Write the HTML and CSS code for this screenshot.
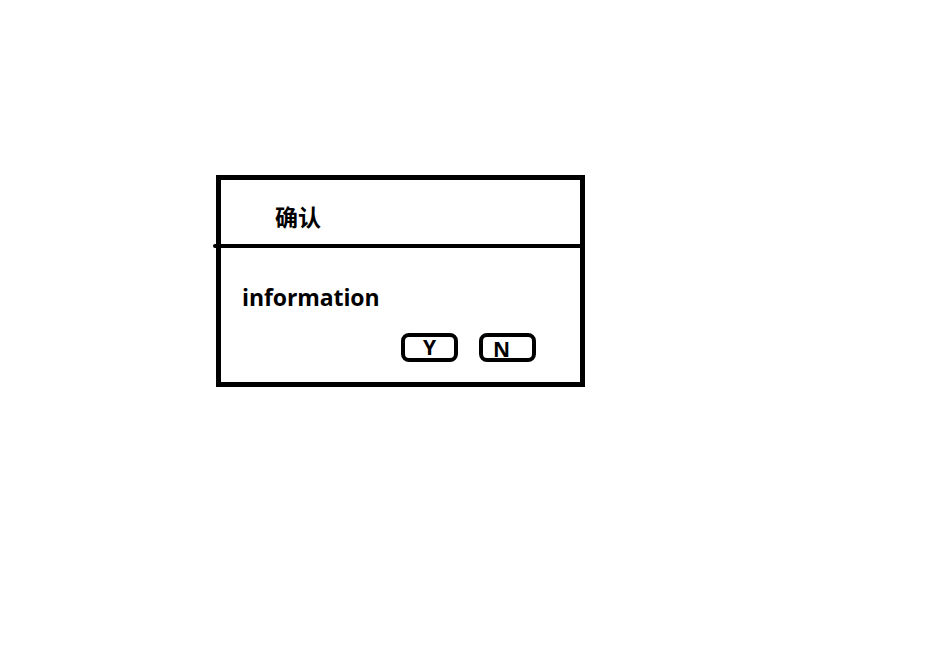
FILE: index.html
```html
<!DOCTYPE html>
<html lang="zh">
<head>
<meta charset="utf-8">
<title>确认</title>
<link rel="stylesheet" href="styles.css">
</head>
<body>
<div class="dialog">
  <div class="header"><span class="title">确认</span></div>
  <div class="divider"></div>
  <div class="content">
    <p class="info">information</p>
    <div class="actions">
      <button class="btn btn-y">Y</button>
      <button class="btn btn-n">N</button>
    </div>
  </div>
</div>
</body>
</html>
```

FILE: styles.css
```css
html, body {
  margin: 0;
  padding: 0;
  background: #ffffff;
}
body {
  width: 930px;
  height: 668px;
  overflow: hidden;
  font-family: "Open Sans", "Noto Sans", "Noto Sans CJK SC", sans-serif;
  color: #000;
  padding-top: 175px;
  padding-left: 216px;
  box-sizing: border-box;
}
.dialog {
  width: 369px;
  height: 212px;
  border: 5px solid #000;
  box-sizing: border-box;
  display: flex;
  flex-direction: column;
}
.header {
  height: 64px;
  padding-left: 54px;
  padding-top: 25px;
  box-sizing: border-box;
}
.title {
  display: block;
  font-family: "Noto Sans CJK SC", sans-serif;
  font-weight: 700;
  font-size: 23px;
  line-height: 23px;
}
.divider {
  height: 4px;
  background: #000;
  margin: 0 -4px 0 -8px;
  border-radius: 2px 0 0 2px;
}
.content {
  flex: 1;
  padding: 37px 44px 0 21px;
  display: flex;
  flex-direction: column;
}
.info {
  margin: 0;
  font-weight: 700;
  font-size: 23px;
  line-height: 25px;
  letter-spacing: -0.1px;
}
.actions {
  margin-top: 23px;
  display: flex;
  justify-content: flex-end;
  gap: 21px;
}
.btn {
  width: 57px;
  height: 29px;
  box-sizing: border-box;
  border: 4px solid #000;
  border-radius: 8px;
  background: #fff;
  padding: 0;
  font-family: "Open Sans", sans-serif;
  font-weight: 700;
  font-size: 21px;
  line-height: 21px;
  color: #000;
  display: flex;
  justify-content: center;
  align-items: flex-start;
}
.btn-n {
  justify-content: flex-start;
  padding-left: 10px;
  padding-top: 2px;
}
```
